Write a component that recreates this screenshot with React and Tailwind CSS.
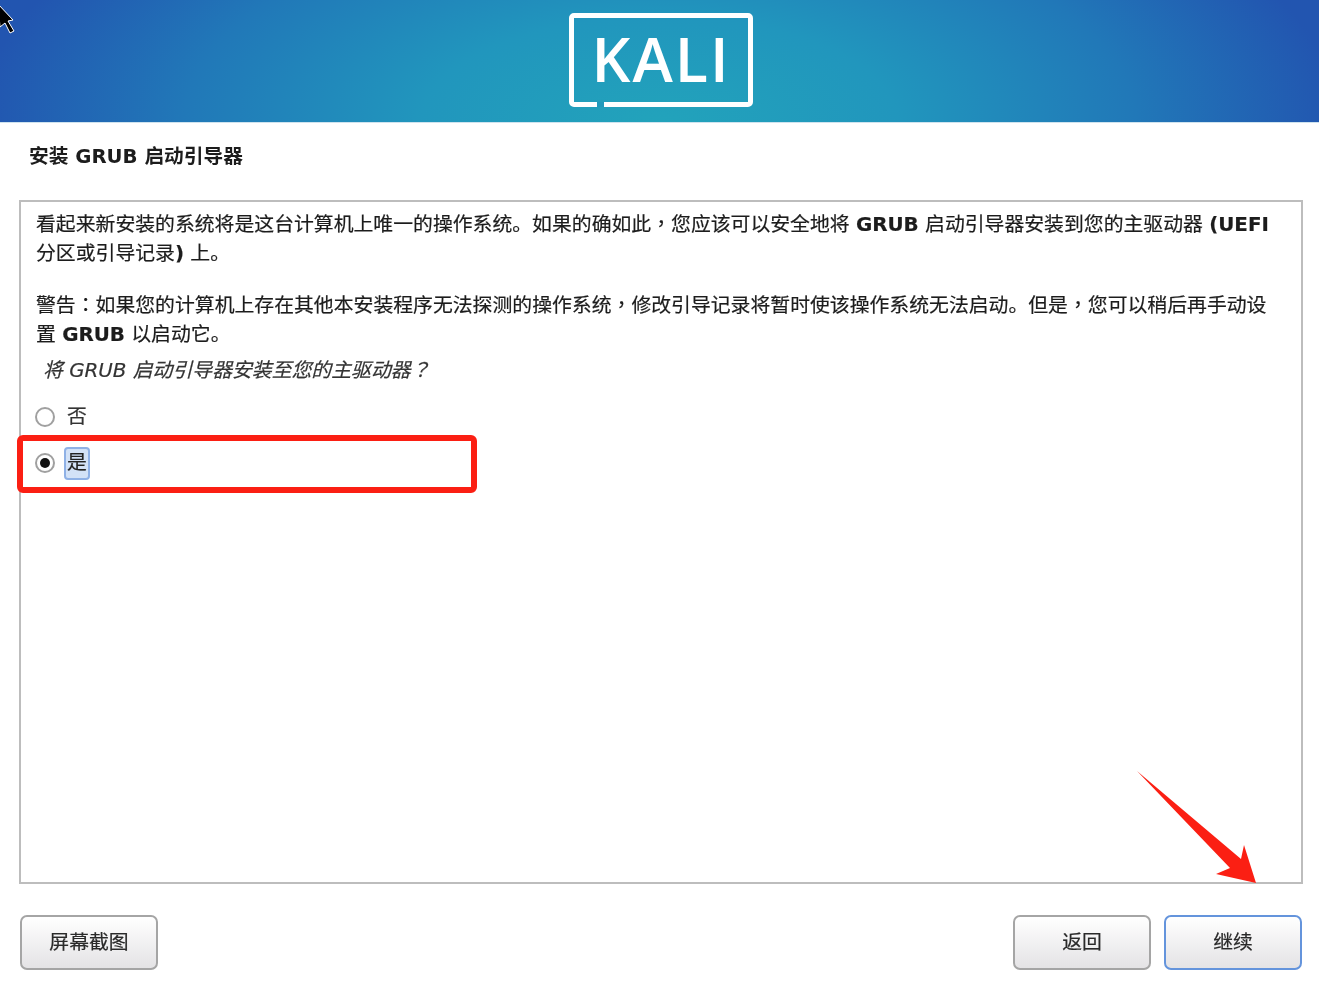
import React from 'react';

const fontStack = "font-['DejaVu_Sans','Noto_Sans_CJK_SC',sans-serif]";

// the installer's font centres this punctuation in its cell
const P = ({ children }) => <span className="font-['Noto_Sans_CJK_TC',sans-serif] leading-[0]">{children}</span>;

const KaliLogo = () => (
  <div className="relative flex h-[94px] w-[184px] items-center justify-center rounded-[5px] border-[5px] border-white pb-[3px]">
    <span className="font-['Open_Sans',sans-serif] text-[61px] font-semibold leading-none tracking-[2px] text-white">KALI</span>
    <div className="absolute bottom-[-5px] left-[23px] h-[5px] w-[7px] bg-[#2199bb]" />
  </div>
);

const Radio = ({ checked }) => (
  <div className="flex h-5 w-5 items-center justify-center rounded-full border-2 border-[#a0a0a0] bg-white">
    {checked && <div className="h-2.5 w-2.5 rounded-full bg-[#111]" />}
  </div>
);

const Button = ({ children, focused }) => (
  <button
    className={`h-[55px] w-[138px] rounded-[7px] border-2 bg-gradient-to-b from-white to-[#e4e3e5] pt-px text-[19.85px] text-[#2a2a2a] [-webkit-text-stroke:0.2px] ${
      focused ? 'border-[#6494dc]' : 'border-[#a5a5a5]'
    }`}
  >
    {children}
  </button>
);

const Cursor = () => (
  <svg className="absolute left-0 top-0" width="18" height="36" viewBox="0 0 18 36">
    <path d="M-2 4 L13 20 L8 21 L14 31 L10 33 L5 23 L0 27 Z" fill="#000" stroke="#fff" strokeWidth="1" />
  </svg>
);

const Annotations = () => (
  <>
    <div className="absolute left-[17px] top-[435px] h-[58px] w-[460px] rounded-[6px] border-[6px] border-[#fb1f13]" />
    <svg className="absolute left-[1130px] top-[765px]" width="135" height="125" viewBox="1130 765 135 125">
      <polygon points="1137,771 1241,859 1244,845 1256,883 1216,874 1230,868" fill="#fb1f13" />
    </svg>
  </>
);

export default function App() {
  return (
    <div className={`relative h-[988px] w-[1319px] overflow-hidden bg-white text-[#1c1c1c] ${fontStack}`}>
      <div className="blur-[0.5px]">
        <header className="flex h-[123px] items-start justify-center border-b border-[#cfe3ee] bg-[radial-gradient(ellipse_680px_300px_at_50%_100%,#22a3bb_0%,#2196bd_35%,#2178b8_70%,#2255b0_100%)] pl-[3px] pt-[13px]">
          <KaliLogo />
        </header>

        <h1 className="mt-[20px] px-[29px] text-[19.7px] font-bold leading-[28px] text-[#1c1c1c]">安装 GRUB 启动引导器</h1>

        <main className="mx-[19px] mt-[29px] h-[684px] w-[1284px] border-2 border-[#bdbdbd] px-[15px] pt-[8px] text-[19.85px] [-webkit-text-stroke:0.2px]">
          <p className="leading-[29px]">
            看起来新安装的系统将是这台计算机上唯一的操作系统。如果的确如此<P>，</P>您应该可以安全地将 <b>GRUB</b> 启动引导器安装到您的主驱动器 <b>(UEFI</b>
            <br />
            分区或引导记录<b>)</b> 上。
          </p>
          <p className="mt-[23px] leading-[29px]">
            警告<P>：</P>如果您的计算机上存在其他本安装程序无法探测的操作系统<P>，</P>修改引导记录将暂时使该操作系统无法启动。但是<P>，</P>您可以稍后再手动设
            <br />
            置 <b>GRUB</b> 以启动它。
          </p>
          <p className="mt-[7px] pl-[7px] italic leading-[29px] text-[#333]">将 GRUB 启动引导器安装至您的主驱动器<P>？</P></p>

          <div className="-ml-px mt-[9px] flex h-[46px] items-center gap-[12px] text-[#333]">
            <Radio />
            <span>否</span>
          </div>
          <div className="-ml-px flex h-[46px] items-center gap-[9px]">
            <Radio checked />
            <span className="flex h-[33px] w-[26px] items-center justify-center rounded-[4px] border-2 border-[#8fb1e6] bg-[#d3e2f7] text-[#222]">是</span>
          </div>
        </main>

        <footer className="mt-[31px] flex justify-between pl-[20px] pr-[17px]">
          <Button>屏幕截图</Button>
          <div className="flex gap-[13px]">
            <Button>返回</Button>
            <Button focused>继续</Button>
          </div>
        </footer>
      </div>

      <Annotations />
      <Cursor />
    </div>
  );
}
